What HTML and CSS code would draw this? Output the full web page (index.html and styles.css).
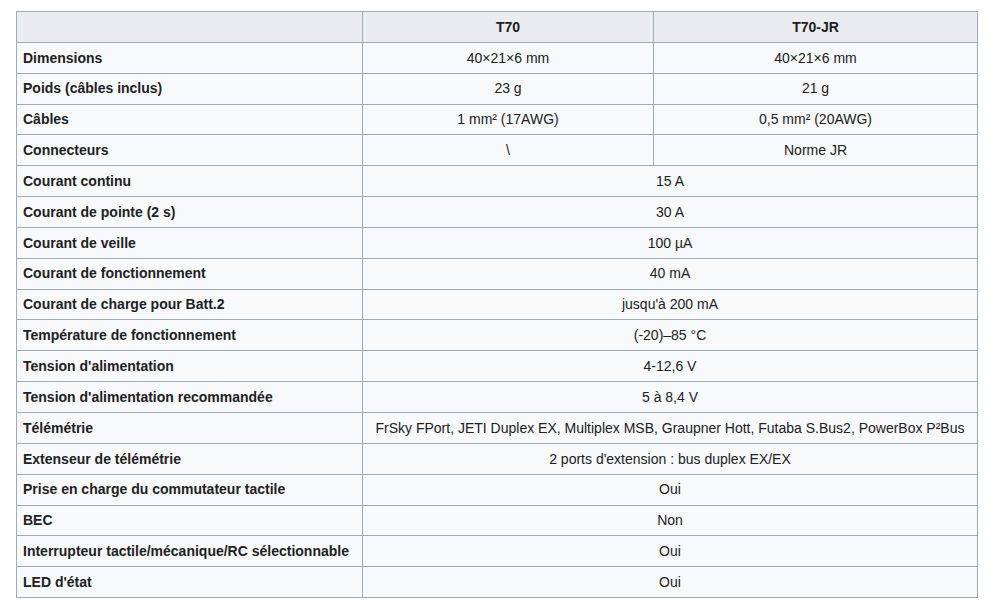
FILE: index.html
```html
<!DOCTYPE html>
<html lang="fr">
<head>
<meta charset="utf-8">
<link rel="stylesheet" href="styles.css">
</head>
<body>
<table class="wikitable">
<colgroup><col class="c1"><col class="c2"><col class="c3"></colgroup>
<thead>
<tr><th class="top"></th><th class="top">T70</th><th class="top">T70-JR</th></tr>
</thead>
<tbody>
<tr><th>Dimensions</th><td>40×21×6 mm</td><td>40×21×6 mm</td></tr>
<tr><th>Poids (câbles inclus)</th><td>23 g</td><td>21 g</td></tr>
<tr><th>Câbles</th><td>1 mm² (17AWG)</td><td>0,5 mm² (20AWG)</td></tr>
<tr><th>Connecteurs</th><td>\</td><td>Norme JR</td></tr>
<tr><th>Courant continu</th><td colspan="2">15 A</td></tr>
<tr><th>Courant de pointe (2 s)</th><td colspan="2">30 A</td></tr>
<tr><th>Courant de veille</th><td colspan="2">100 µA</td></tr>
<tr><th>Courant de fonctionnement</th><td colspan="2">40 mA</td></tr>
<tr><th>Courant de charge pour Batt.2</th><td colspan="2">jusqu'à 200 mA</td></tr>
<tr><th>Température de fonctionnement</th><td colspan="2">(-20)–85 °C</td></tr>
<tr><th>Tension d'alimentation</th><td colspan="2">4-12,6 V</td></tr>
<tr><th>Tension d'alimentation recommandée</th><td colspan="2">5 à 8,4 V</td></tr>
<tr><th>Télémétrie</th><td colspan="2">FrSky FPort, JETI Duplex EX, Multiplex MSB, Graupner Hott, Futaba S.Bus2, PowerBox P²Bus</td></tr>
<tr><th>Extenseur de télémétrie</th><td colspan="2">2 ports d'extension : bus duplex EX/EX</td></tr>
<tr><th>Prise en charge du commutateur tactile</th><td colspan="2">Oui</td></tr>
<tr><th>BEC</th><td colspan="2">Non</td></tr>
<tr><th>Interrupteur tactile/mécanique/RC sélectionnable</th><td colspan="2">Oui</td></tr>
<tr><th>LED d'état</th><td colspan="2">Oui</td></tr>
</tbody>
</table>
</body>
</html>
```
FILE: styles.css
```css
html, body {
  margin: 0;
  padding: 0;
  background: #ffffff;
}
body {
  padding: 11px 16px;
  font-family: "Liberation Sans", Arial, sans-serif;
  font-size: 14px;
  color: #202122;
}
.wikitable {
  border-collapse: collapse;
  table-layout: fixed;
  width: 961px;
  background: #f8f9fa;
  color: #202122;
  border: 1px solid #a2a9b1;
}
.c1 { width: 346px; }
.c2 { width: 291px; }
.c3 { width: 324px; }
.wikitable th,
.wikitable td {
  border: 1px solid #a2a9b1;
  padding: 3.72px 6px;
  line-height: 22.4px;
  box-sizing: content-box;
}
.wikitable th {
  text-align: left;
  font-weight: bold;
  background: #f8f9fa;
}
.wikitable th.top {
  background: #eaecf0;
  text-align: center;
}
.wikitable td {
  text-align: center;
}
```
